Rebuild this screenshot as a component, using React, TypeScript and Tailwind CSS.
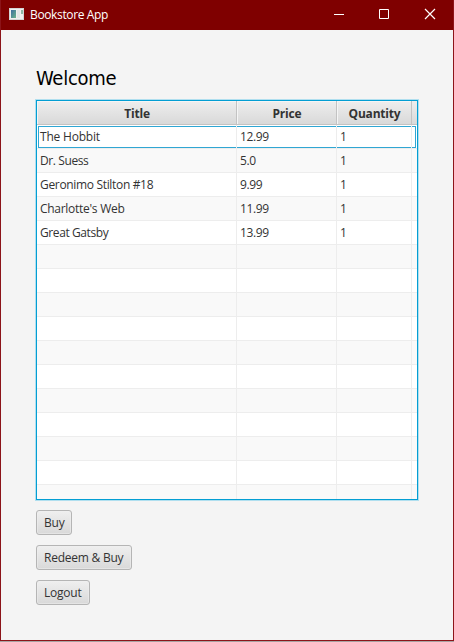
const books = [
  { title: 'The Hobbit', price: '12.99', quantity: '1', track: 'tracking-[-0.2px]' },
  { title: 'Dr. Suess', price: '5.0', quantity: '1', track: 'tracking-[-0.4px]' },
  { title: 'Geronimo Stilton #18', price: '9.99', quantity: '1', track: 'tracking-[-0.33px]' },
  { title: "Charlotte's Web", price: '11.99', quantity: '1', track: 'tracking-[-0.28px]' },
  { title: 'Great Gatsby', price: '13.99', quantity: '1', track: 'tracking-[-0.4px]' },
];
const emptyRows = Array.from({ length: 11 }, () => null);
const rows = [...books, ...emptyRows];

const columns = 'grid grid-cols-[200px_100px_75px_5px]';

function TitleBar() {
  return (
    <header className="flex h-[30px] shrink-0 items-center bg-[#7f0000] pl-[8px] text-white">
      <svg width="15" height="12" viewBox="0 0 15 12" className="mb-[2px]" shapeRendering="crispEdges">
        <defs>
          <linearGradient id="pane" x1="0" y1="0" x2="1" y2="1">
            <stop offset="0" stopColor="#3e6ea0" />
            <stop offset="1" stopColor="#6bb58a" />
          </linearGradient>
        </defs>
        <rect width="15" height="12" fill="#d4d4d4" />
        <rect x="1" y="1" width="13" height="10" fill="#f0f0f0" />
        <rect x="2" y="2" width="5" height="8" fill="url(#pane)" />
        <rect x="8" y="2" width="3" height="8" fill="#e4e6e6" />
        <rect x="12" y="2" width="2" height="4" fill="#8eb8a5" />
      </svg>
      <h1 className="ml-[6px] flex-1 text-[12px] leading-4 tracking-[-0.36px]">Bookstore App</h1>
      <svg width="120" height="30" viewBox="0 0 120 30" fill="none" stroke="white">
        <path d="M1 14.5H11" />
        <path d="M46.500 9.500h9v9h-9z" />
        <path d="M92 9l10 10M102 9l-10 10" strokeWidth="1.2" />
      </svg>
    </header>
  );
}

function HeaderCell({ label }: { label: string }) {
  return (
    <div className="flex items-center justify-center border-r border-b border-[#c3c3c3] bg-linear-to-b from-[#eeeeee] to-[#d9d9d9] pt-[3px] pl-px text-[12px] font-bold tracking-[-0.2px] shadow-[inset_1px_1px_0_#f5f5f5]">
      {label}
    </div>
  );
}

function Cell({ text, track }: { text?: string; track?: string }) {
  return (
    <div className={`relative flex items-center overflow-hidden border-r border-[#ededed] pt-px pl-[3px] whitespace-nowrap ${track ?? ''}`}>
      {text}
    </div>
  );
}

function BookTable() {
  return (
    <div className="h-[400px] w-[382px] overflow-hidden border border-[#039ed3] bg-white text-[12px] shadow-[0_0_0_1px_#b0dfef]">
      <div className={`${columns} h-6`}>
        <HeaderCell label="Title" />
        <HeaderCell label="Price" />
        <HeaderCell label="Quantity" />
        <div className="border-b border-[#c3c3c3] bg-linear-to-b from-[#eeeeee] to-[#d9d9d9]" />
      </div>
      {rows.map((book, i) => (
        <div
          key={i}
          className={`${columns} relative h-6 border-b border-[#ededed] ${i % 2 ? 'bg-[#f9f9f9]' : 'bg-white'}`}
        >
          {i === 0 && (
            <div className="pointer-events-none absolute top-px left-px h-[22px] w-[378px] border border-[#30a6d3]" />
          )}
          <Cell text={book?.title} track={book?.track} />
          <Cell text={book?.price} track="tracking-[-0.35px]" />
          <Cell text={book?.quantity} />
        </div>
      ))}
    </div>
  );
}

function Button({ label, width }: { label: string; width: string }) {
  return (
    <button
      className={`${width} h-[25px] rounded-[3px] border border-[#b5b5b5] bg-linear-to-b from-[#efefef] to-[#d9d9d9] pt-px pl-[7px] text-left text-[12px] leading-[22px] tracking-[-0.24px] whitespace-nowrap shadow-[inset_0_0_0_1px_#f0f0f080]`}
    >
      {label}
    </button>
  );
}

export default function App() {
  return (
    <div className="h-[642px] w-[454px] overflow-hidden bg-[#a9a3a3] font-['Open_Sans','Noto_Sans',sans-serif] text-[#333333]">
      <div className="flex h-[641px] flex-col border-x border-b border-[#8c1419] bg-[#f4f4f4]">
        <TitleBar />
        <main className="flex flex-col items-start pl-[35px]">
          <h2 className="mt-[34px] h-9 font-['DejaVu_Sans_Condensed','DejaVu_Sans',sans-serif] text-[20px] leading-7 font-normal [font-stretch:condensed] tracking-[-0.25px] text-black">
            Welcome
          </h2>
          <BookTable />
          <div className="mt-[10px] flex flex-col gap-[10px]">
            <Button label="Buy" width="w-9" />
            <Button label="Redeem & Buy" width="w-24" />
            <Button label="Logout" width="w-[54px]" />
          </div>
        </main>
      </div>
    </div>
  );
}
